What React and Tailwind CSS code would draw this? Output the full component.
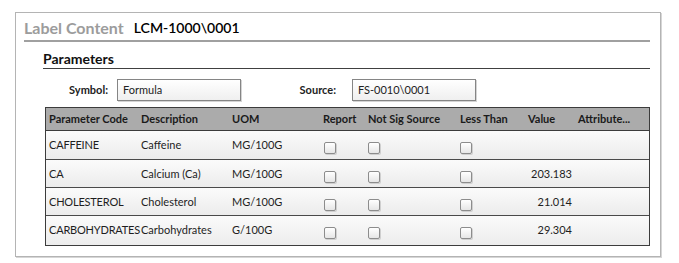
import React from 'react';

const rows = [
  { code: 'CAFFEINE', desc: 'Caffeine', uom: 'MG/100G', value: '', h: 'h-[29px]' },
  { code: 'CA', desc: 'Calcium (Ca)', uom: 'MG/100G', value: '203.183', h: 'h-[28px]' },
  { code: 'CHOLESTEROL', desc: 'Cholesterol', uom: 'MG/100G', value: '21.014', h: 'h-[28px]' },
  { code: 'CARBOHYDRATES', desc: 'Carbohydrates', uom: 'G/100G', value: '29.304', h: 'h-[29px]' },
];

const cols = 'grid grid-cols-[91px_91px_91px_46px_91px_68px_50px_1fr]';

function Checkbox() {
  return (
    <span className="block w-[12px] h-[12px] rounded-[2px] border border-[#8c8c8c] bg-gradient-to-b from-white to-[#e6e6e6] shadow-[1px_1px_0_#cfcfcf]" />
  );
}

function Field({ value }) {
  return (
    <div className="w-[124px] h-[22px] border border-[#858585] bg-gradient-to-b from-white to-[#efefef] shadow-[1px_1px_0_#d4d4d4] flex items-center pl-[5px] text-[11px] font-normal text-[#222]">
      {value}
    </div>
  );
}

export default function App() {
  return (
    <div className="w-[679px] h-[263px] bg-white pt-[12px] pl-[15px]" style={{ fontFamily: 'Lato, "Open Sans", sans-serif' }}>
      <div className="w-[646px] h-[245px] border border-[#b4b4b4] shadow-[1px_1px_0_#d6d6d6] pl-[8px] pr-[10px]">
        {/* Title */}
        <div className="flex items-end gap-[10px] h-[29px] border-b-2 border-[#a0a0a0] pb-[2px]">
          <span className="text-[16px] leading-[20px] font-bold text-[#9c9c9c]">Label Content</span>
          <span className="text-[14px] leading-[20px] font-semibold text-black">{'LCM-1000\\0001'}</span>
        </div>

        <div className="ml-[19px]">
          {/* Parameters header */}
          <div className="mt-[9px] h-[18px] border-b border-[#404040] text-[14px] leading-[16px] font-bold text-[#111]">
            Parameters
          </div>

          {/* Filter fields */}
          <div className="flex items-center mt-[10px] h-[22px] text-[11px] font-bold text-[#222]">
            <span className="w-[65px] text-right">Symbol:</span>
            <span className="ml-[9px]"><Field value="Formula" /></span>
            <span className="w-[95px] text-right">Source:</span>
            <span className="ml-[16px]"><Field value={'FS-0010\\0001'} /></span>
          </div>

          {/* Table */}
          <div className="mt-[6px] ml-[2px] w-[605px] border border-[#3c3c3c] text-[11px] text-[#1e1e1e]">
            <div className={`${cols} h-[23px] items-center bg-[#ababab] border-b border-[#3c3c3c] font-bold text-[#1a1a1a]`}>
              <span className="pl-[3px] whitespace-nowrap">Parameter Code</span>
              <span className="pl-[4px]">Description</span>
              <span className="pl-[4px]">UOM</span>
              <span className="pl-[4px]">Report</span>
              <span className="pl-[3px] whitespace-nowrap">Not Sig Source</span>
              <span className="pl-[4px] whitespace-nowrap">Less Than</span>
              <span className="pl-[4px]">Value</span>
              <span className="pl-[4px]">Attribute...</span>
            </div>
            {rows.map((r, i) => (
              <div
                key={r.code}
                className={`${cols} ${r.h} items-start bg-gradient-to-b from-[#fbfbfb] to-[#ececec] ${i < rows.length - 1 ? 'border-b border-[#4a4a4a]' : ''}`}
              >
                <span className="pl-[3px] pt-[6px] whitespace-nowrap tracking-[-0.2px]">{r.code}</span>
                <span className="pl-[4px] pt-[6px] whitespace-nowrap">{r.desc}</span>
                <span className="pl-[4px] pt-[6px]">{r.uom}</span>
                <span className="pl-[5px] pt-[11px]"><Checkbox /></span>
                <span className="pl-[3px] pt-[11px]"><Checkbox /></span>
                <span className="pl-[4px] pt-[11px]"><Checkbox /></span>
                <span className="pr-[2px] pt-[6px] text-right">{r.value}</span>
                <span />
              </div>
            ))}
          </div>
        </div>
      </div>
    </div>
  );
}
